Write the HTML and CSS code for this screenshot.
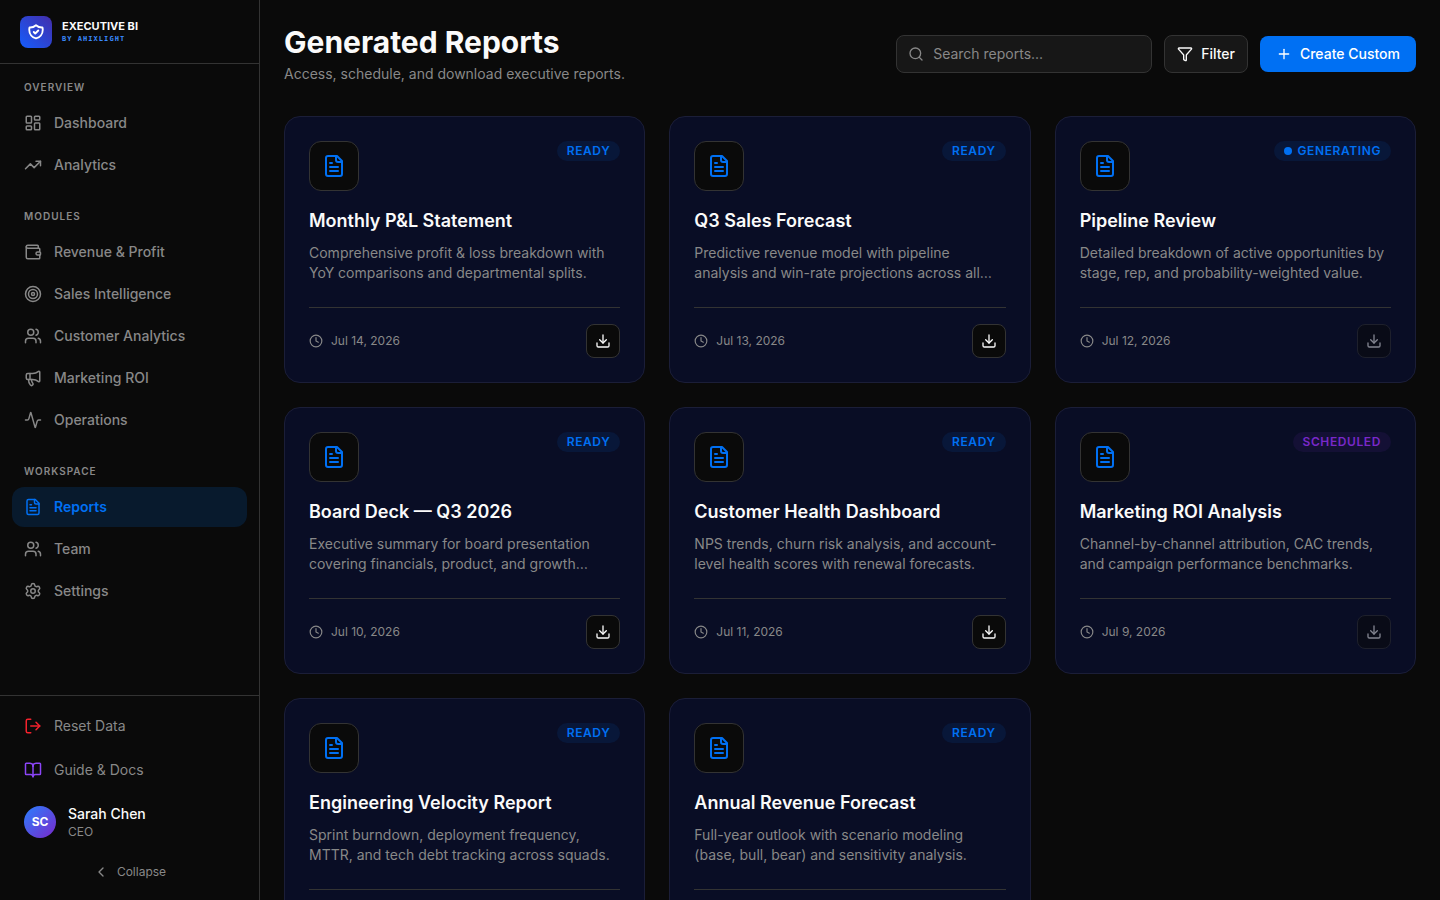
FILE: index.html
```html
<!DOCTYPE html>
<html lang="en">
<head>
<meta charset="utf-8">
<meta name="viewport" content="width=device-width, initial-scale=1">
<title>Generated Reports – Executive BI</title>
<link rel="stylesheet" href="styles.css">
</head>
<body>
<svg class="sprite" aria-hidden="true">
  <symbol id="i-shield" viewBox="0 0 24 24"><path d="m9 12 2 2 4-4m5.618-4.016A11.955 11.955 0 0 1 12 2.944a11.955 11.955 0 0 1-8.618 3.040A12.020 12.020 0 0 0 3 9c0 5.591 3.824 10.290 9 11.622 5.176-1.332 9-6.030 9-11.622 0-1.042-.133-2.052-.382-3.016z"/></symbol>
  <symbol id="i-dashboard" viewBox="0 0 24 24"><rect width="7" height="9" x="3" y="3" rx="1"/><rect width="7" height="5" x="14" y="3" rx="1"/><rect width="7" height="9" x="14" y="12" rx="1"/><rect width="7" height="5" x="3" y="16" rx="1"/></symbol>
  <symbol id="i-trend" viewBox="0 0 24 24"><path d="M16 7h6v6"/><path d="m22 7-8.500 8.500-5-5L2 17"/></symbol>
  <symbol id="i-wallet" viewBox="0 0 24 24"><path d="M19 7V4a1 1 0 0 0-1-1H5a2 2 0 0 0 0 4h15a1 1 0 0 1 1 1v4h-3a2 2 0 0 0 0 4h3a1 1 0 0 0 1-1v-2a1 1 0 0 0-1-1"/><path d="M3 5v14a2 2 0 0 0 2 2h15a1 1 0 0 0 1-1v-4"/></symbol>
  <symbol id="i-target" viewBox="0 0 24 24"><circle cx="12" cy="12" r="10"/><circle cx="12" cy="12" r="6"/><circle cx="12" cy="12" r="2"/></symbol>
  <symbol id="i-users" viewBox="0 0 24 24"><path d="M16 21v-2a4 4 0 0 0-4-4H6a4 4 0 0 0-4 4v2"/><path d="M16 3.128a4 4 0 0 1 0 7.744"/><path d="M22 21v-2a4 4 0 0 0-3-3.870"/><circle cx="9" cy="7" r="4"/></symbol>
  <symbol id="i-megaphone" viewBox="0 0 24 24"><path d="M11 6a13 13 0 0 0 8.400-2.800A1 1 0 0 1 21 4v12a1 1 0 0 1-1.600.8A13 13 0 0 0 11 14H5a2 2 0 0 1-2-2V8a2 2 0 0 1 2-2z"/><path d="M6 14a12 12 0 0 0 2.400 7.200 2 2 0 0 0 3.200-2.400A8 8 0 0 1 10 14"/><path d="M8 6v8"/></symbol>
  <symbol id="i-activity" viewBox="0 0 24 24"><path d="M22 12h-2.480a2 2 0 0 0-1.930 1.460l-2.350 8.360a.25.25 0 0 1-.48 0L9.240 2.180a.25.25 0 0 0-.48 0l-2.350 8.360A2 2 0 0 1 4.490 12H2"/></symbol>
  <symbol id="i-file" viewBox="0 0 24 24"><path d="M15 2H6a2 2 0 0 0-2 2v16a2 2 0 0 0 2 2h12a2 2 0 0 0 2-2V7Z"/><path d="M14 2v4a2 2 0 0 0 2 2h4"/><path d="M10 9H8"/><path d="M16 13H8"/><path d="M16 17H8"/></symbol>
  <symbol id="i-settings" viewBox="0 0 24 24"><path d="M9.671 4.136a2.340 2.340 0 0 1 4.659 0 2.340 2.340 0 0 0 3.319 1.915 2.340 2.340 0 0 1 2.330 4.033 2.340 2.340 0 0 0 0 3.831 2.340 2.340 0 0 1-2.330 4.033 2.340 2.340 0 0 0-3.319 1.915 2.340 2.340 0 0 1-4.659 0 2.340 2.340 0 0 0-3.320-1.915 2.340 2.340 0 0 1-2.330-4.033 2.340 2.340 0 0 0 0-3.831A2.340 2.340 0 0 1 6.350 6.051a2.340 2.340 0 0 0 3.319-1.915"/><circle cx="12" cy="12" r="3"/></symbol>
  <symbol id="i-logout" viewBox="0 0 24 24"><path d="m16 17 5-5-5-5"/><path d="M21 12H9"/><path d="M9 21H5a2 2 0 0 1-2-2V5a2 2 0 0 1 2-2h4"/></symbol>
  <symbol id="i-book" viewBox="0 0 24 24"><path d="M12 7v14"/><path d="M3 18a1 1 0 0 1-1-1V4a1 1 0 0 1 1-1h5a4 4 0 0 1 4 4 4 4 0 0 1 4-4h5a1 1 0 0 1 1 1v13a1 1 0 0 1-1 1h-6a3 3 0 0 0-3 3 3 3 0 0 0-3-3z"/></symbol>
  <symbol id="i-chevron" viewBox="0 0 24 24"><path d="m15 18-6-6 6-6"/></symbol>
  <symbol id="i-search" viewBox="0 0 24 24"><path d="m21 21-4.340-4.340"/><circle cx="11" cy="11" r="8"/></symbol>
  <symbol id="i-filter" viewBox="0 0 24 24"><path d="M10 20a1 1 0 0 0 .553.895l2 1A1 1 0 0 0 14 21v-7a2 2 0 0 1 .517-1.341L21.740 4.670A1 1 0 0 0 21 3H3a1 1 0 0 0-.742 1.670l7.225 7.989A2 2 0 0 1 10 14z"/></symbol>
  <symbol id="i-plus" viewBox="0 0 24 24"><path d="M5 12h14"/><path d="M12 5v14"/></symbol>
  <symbol id="i-clock" viewBox="0 0 24 24"><circle cx="12" cy="12" r="10"/><path d="M12 6v6l4 2"/></symbol>
  <symbol id="i-download" viewBox="0 0 24 24"><path d="M12 15V3"/><path d="M21 15v4a2 2 0 0 1-2 2H5a2 2 0 0 1-2-2v-4"/><path d="m7 10 5 5 5-5"/></symbol>
</svg>

<div class="app">
  <aside class="sidebar">
    <div class="brand">
      <span class="brand-mark"><svg class="icon icon-brand"><use href="#i-shield"/></svg></span>
      <span class="brand-text">
        <span class="brand-name">EXECUTIVE BI</span>
        <span class="brand-by">BY AHIXLIGHT</span>
      </span>
    </div>

    <nav class="nav">
      <section class="nav-group">
        <h2 class="nav-label">OVERVIEW</h2>
        <a class="nav-item" href="#dashboard"><svg class="icon"><use href="#i-dashboard"/></svg>Dashboard</a>
        <a class="nav-item" href="#analytics"><svg class="icon"><use href="#i-trend"/></svg>Analytics</a>
      </section>
      <section class="nav-group">
        <h2 class="nav-label">MODULES</h2>
        <a class="nav-item" href="#revenue"><svg class="icon"><use href="#i-wallet"/></svg>Revenue &amp; Profit</a>
        <a class="nav-item" href="#sales"><svg class="icon"><use href="#i-target"/></svg>Sales Intelligence</a>
        <a class="nav-item" href="#customers"><svg class="icon"><use href="#i-users"/></svg>Customer Analytics</a>
        <a class="nav-item" href="#marketing"><svg class="icon"><use href="#i-megaphone"/></svg>Marketing ROI</a>
        <a class="nav-item" href="#operations"><svg class="icon"><use href="#i-activity"/></svg>Operations</a>
      </section>
      <section class="nav-group">
        <h2 class="nav-label">WORKSPACE</h2>
        <a class="nav-item active" href="#reports" aria-current="page"><svg class="icon"><use href="#i-file"/></svg>Reports</a>
        <a class="nav-item" href="#team"><svg class="icon"><use href="#i-users"/></svg>Team</a>
        <a class="nav-item" href="#settings"><svg class="icon"><use href="#i-settings"/></svg>Settings</a>
      </section>
    </nav>

    <div class="side-foot">
      <button class="foot-item" type="button"><svg class="icon red"><use href="#i-logout"/></svg>Reset Data</button>
      <a class="foot-item" href="#docs"><svg class="icon violet"><use href="#i-book"/></svg>Guide &amp; Docs</a>
      <div class="user">
        <span class="avatar">SC</span>
        <span class="user-text">
          <span class="user-name">Sarah Chen</span>
          <span class="user-role">CEO</span>
        </span>
      </div>
      <button class="collapse" type="button"><svg class="icon icon-sm"><use href="#i-chevron"/></svg>Collapse</button>
    </div>
  </aside>

  <main class="main">
    <header class="page-head">
      <div>
        <h1 class="title">Generated Reports</h1>
        <p class="subtitle">Access, schedule, and download executive reports.</p>
      </div>
      <div class="tools">
        <label class="search">
          <svg class="icon icon-sm"><use href="#i-search"/></svg>
          <input class="search-input" type="text" placeholder="Search reports..." aria-label="Search reports">
        </label>
        <button class="btn btn-outline" type="button"><svg class="icon icon-sm"><use href="#i-filter"/></svg>Filter</button>
        <button class="btn btn-primary" type="button"><svg class="icon icon-sm"><use href="#i-plus"/></svg>Create Custom</button>
      </div>
    </header>

    <div class="grid">
      <article class="card">
        <div class="card-top"><span class="card-icon"><svg class="icon icon-lg"><use href="#i-file"/></svg></span><span class="badge">READY</span></div>
        <h3 class="card-title">Monthly P&amp;L Statement</h3>
        <p class="card-desc">Comprehensive profit &amp; loss breakdown with YoY comparisons and departmental splits.</p>
        <div class="card-foot"><span class="date"><svg class="icon icon-xs"><use href="#i-clock"/></svg>Jul 14, 2026</span><button class="download" type="button" aria-label="Download"><svg class="icon icon-sm"><use href="#i-download"/></svg></button></div>
      </article>
      <article class="card">
        <div class="card-top"><span class="card-icon"><svg class="icon icon-lg"><use href="#i-file"/></svg></span><span class="badge">READY</span></div>
        <h3 class="card-title">Q3 Sales Forecast</h3>
        <p class="card-desc">Predictive revenue model with pipeline analysis and win-rate projections across all…</p>
        <div class="card-foot"><span class="date"><svg class="icon icon-xs"><use href="#i-clock"/></svg>Jul 13, 2026</span><button class="download" type="button" aria-label="Download"><svg class="icon icon-sm"><use href="#i-download"/></svg></button></div>
      </article>
      <article class="card">
        <div class="card-top"><span class="card-icon"><svg class="icon icon-lg"><use href="#i-file"/></svg></span><span class="badge"><span class="dot"></span>GENERATING</span></div>
        <h3 class="card-title">Pipeline Review</h3>
        <p class="card-desc">Detailed breakdown of active opportunities by stage, rep, and probability-weighted value.</p>
        <div class="card-foot"><span class="date"><svg class="icon icon-xs"><use href="#i-clock"/></svg>Jul 12, 2026</span><button class="download" type="button" aria-label="Download" disabled><svg class="icon icon-sm"><use href="#i-download"/></svg></button></div>
      </article>
      <article class="card">
        <div class="card-top"><span class="card-icon"><svg class="icon icon-lg"><use href="#i-file"/></svg></span><span class="badge">READY</span></div>
        <h3 class="card-title">Board Deck — Q3 2026</h3>
        <p class="card-desc">Executive summary for board presentation covering financials, product, and growth…</p>
        <div class="card-foot"><span class="date"><svg class="icon icon-xs"><use href="#i-clock"/></svg>Jul 10, 2026</span><button class="download" type="button" aria-label="Download"><svg class="icon icon-sm"><use href="#i-download"/></svg></button></div>
      </article>
      <article class="card">
        <div class="card-top"><span class="card-icon"><svg class="icon icon-lg"><use href="#i-file"/></svg></span><span class="badge">READY</span></div>
        <h3 class="card-title">Customer Health Dashboard</h3>
        <p class="card-desc">NPS trends, churn risk analysis, and account-level health scores with renewal forecasts.</p>
        <div class="card-foot"><span class="date"><svg class="icon icon-xs"><use href="#i-clock"/></svg>Jul 11, 2026</span><button class="download" type="button" aria-label="Download"><svg class="icon icon-sm"><use href="#i-download"/></svg></button></div>
      </article>
      <article class="card">
        <div class="card-top"><span class="card-icon"><svg class="icon icon-lg"><use href="#i-file"/></svg></span><span class="badge scheduled">SCHEDULED</span></div>
        <h3 class="card-title">Marketing ROI Analysis</h3>
        <p class="card-desc">Channel-by-channel attribution, CAC trends, and campaign performance benchmarks.</p>
        <div class="card-foot"><span class="date"><svg class="icon icon-xs"><use href="#i-clock"/></svg>Jul 9, 2026</span><button class="download" type="button" aria-label="Download" disabled><svg class="icon icon-sm"><use href="#i-download"/></svg></button></div>
      </article>
      <article class="card">
        <div class="card-top"><span class="card-icon"><svg class="icon icon-lg"><use href="#i-file"/></svg></span><span class="badge">READY</span></div>
        <h3 class="card-title">Engineering Velocity Report</h3>
        <p class="card-desc">Sprint burndown, deployment frequency, MTTR, and tech debt tracking across squads.</p>
        <div class="card-foot"><span class="date"><svg class="icon icon-xs"><use href="#i-clock"/></svg>Jul 8, 2026</span><button class="download" type="button" aria-label="Download"><svg class="icon icon-sm"><use href="#i-download"/></svg></button></div>
      </article>
      <article class="card">
        <div class="card-top"><span class="card-icon"><svg class="icon icon-lg"><use href="#i-file"/></svg></span><span class="badge">READY</span></div>
        <h3 class="card-title">Annual Revenue Forecast</h3>
        <p class="card-desc">Full-year outlook with scenario modeling (base, bull, bear) and sensitivity analysis.</p>
        <div class="card-foot"><span class="date"><svg class="icon icon-xs"><use href="#i-clock"/></svg>Jul 7, 2026</span><button class="download" type="button" aria-label="Download"><svg class="icon icon-sm"><use href="#i-download"/></svg></button></div>
      </article>
    </div>
  </main>
</div>
</body>
</html>
```
FILE: styles.css
```css
:root {
  --bg: #0a0a0a;
  --surface: #171717;
  --line: #333333;
  --text: #fafafa;
  --muted: #888888;
  --blue: #0070f3;
  --purple: #7928ca;
}

* { box-sizing: border-box; }

body {
  margin: 0;
  background: var(--bg);
  color: var(--text);
  font-family: Inter, "Liberation Sans", sans-serif;
  font-size: 14px;
  line-height: 20px;
}

h1, h2, h3, p { margin: 0; }
a { color: inherit; text-decoration: none; }
button, input { font: inherit; color: inherit; }
button { cursor: pointer; }

.sprite { position: absolute; width: 0; height: 0; }

.icon {
  width: 18px;
  height: 18px;
  flex: none;
  fill: none;
  stroke: currentColor;
  stroke-width: 2;
  stroke-linecap: round;
  stroke-linejoin: round;
}
.icon-xs { width: 14px; height: 14px; }
.icon-sm { width: 16px; height: 16px; }
.icon-brand { stroke-width: 2.5; }
.icon-lg { width: 24px; height: 24px; }
.red { color: #f5222d; }
.violet { color: #8b45f7; }

.app { display: flex; height: 100vh; }

/* Sidebar */
.sidebar {
  display: flex;
  flex-direction: column;
  flex: none;
  width: 260px;
  border-right: 1px solid var(--line);
  color: var(--muted);
}

.brand {
  display: flex;
  align-items: center;
  gap: 10px;
  height: 64px;
  padding: 0 20px;
  border-bottom: 1px solid var(--line);
}
.brand-mark {
  display: grid;
  place-items: center;
  width: 32px;
  height: 32px;
  border-radius: 8px;
  background: linear-gradient(to top right, #155dfc, #432dab);
  color: #fff;
}
.brand-text { display: flex; flex-direction: column; }
.brand-name {
  color: var(--text);
  font-size: 11px;
  font-weight: 700;
  line-height: 14px;
}
.brand-by {
  color: #3b8bff;
  font-family: "DejaVu Sans Mono", monospace;
  font-size: 7px;
  font-weight: 700;
  line-height: 12px;
  letter-spacing: 0.15em;
}

.nav {
  display: flex;
  flex-direction: column;
  flex: 1;
  gap: 24px;
  padding: 16px 12px;
  overflow: hidden;
}
.nav-group { display: flex; flex-direction: column; gap: 2px; }
.nav-label {
  padding: 0 12px;
  margin-bottom: 6px;
  font-size: 10px;
  font-weight: 600;
  line-height: 15px;
  letter-spacing: 0.1em;
}
.nav-item, .foot-item {
  display: flex;
  align-items: center;
  gap: 12px;
  height: 40px;
  padding: 0 12px;
  border-radius: 12px;
  font-weight: 500;
}
.nav-item.active { background: #081a2d; color: var(--blue); font-weight: 600; }

.side-foot {
  display: flex;
  flex-direction: column;
  gap: 4px;
  padding: 10px 12px;
  border-top: 1px solid var(--line);
}
.foot-item { border: 0; background: none; font-weight: 400; }
.user {
  display: flex;
  align-items: center;
  gap: 12px;
  padding: 10px 12px;
}
.avatar {
  display: grid;
  place-items: center;
  width: 32px;
  height: 32px;
  border-radius: 50%;
  background: linear-gradient(to bottom right, #2b7fff, #7928ca);
  color: #fff;
  font-size: 12px;
  font-weight: 700;
}
.user-text { display: flex; flex-direction: column; }
.user-name { color: var(--text); font-weight: 500; }
.user-role { font-size: 12px; line-height: 16px; }
.collapse {
  display: flex;
  align-items: center;
  justify-content: center;
  gap: 8px;
  height: 36px;
  border: 0;
  background: none;
  font-size: 12px;
}

/* Main */
.main {
  flex: 1;
  min-width: 0;
  padding: 24px;
  overflow-y: auto;
  scrollbar-width: none;
}
.page-head {
  display: flex;
  align-items: center;
  justify-content: space-between;
  gap: 24px;
  margin-bottom: 32px;
}
.title {
  margin-bottom: 4px;
  font-size: 30px;
  font-weight: 700;
  line-height: 36px;
}
.subtitle { color: var(--muted); }

.tools { display: flex; align-items: center; gap: 12px; }
.search {
  display: flex;
  align-items: center;
  gap: 9px;
  width: 256px;
  height: 38px;
  padding: 0 11px;
  border: 1px solid var(--line);
  border-radius: 8px;
  background: var(--surface);
  color: var(--muted);
}
.search-input {
  flex: 1;
  min-width: 0;
  padding: 0;
  border: 0;
  outline: 0;
  background: none;
  color: var(--text);
}
.search-input::placeholder { color: var(--muted); }

.btn {
  display: flex;
  align-items: center;
  gap: 8px;
  border-radius: 8px;
  font-weight: 500;
  white-space: nowrap;
}
.btn-outline {
  height: 38px;
  padding: 0 12px;
  border: 1px solid var(--line);
  background: var(--surface);
}
.btn-primary {
  height: 36px;
  padding: 0 16px;
  border: 0;
  background: var(--blue);
  color: #fff;
}

.grid {
  display: grid;
  grid-template-columns: repeat(3, minmax(0, 1fr));
  gap: 24px;
}
.card {
  padding: 24px;
  border: 1px solid #1b1e38;
  border-radius: 16px;
  background: #090d25;
}
.card-top {
  display: flex;
  align-items: flex-start;
  justify-content: space-between;
  margin-bottom: 16px;
}
.card-icon {
  display: grid;
  place-items: center;
  width: 50px;
  height: 50px;
  border: 1px solid var(--line);
  border-radius: 12px;
  background: var(--bg);
  color: var(--blue);
}
.badge {
  display: flex;
  align-items: center;
  gap: 6px;
  height: 20px;
  padding: 0 10px;
  border-radius: 10px;
  background: #081739;
  color: var(--blue);
  font-size: 12px;
  font-weight: 600;
  letter-spacing: 0.05em;
}
.badge.scheduled { background: #141035; color: var(--purple); }
.dot {
  width: 8px;
  height: 8px;
  border-radius: 50%;
  background: var(--blue);
}
.card-title {
  margin-bottom: 8px;
  font-size: 18px;
  font-weight: 600;
  line-height: 28px;
}
.card-desc {
  display: -webkit-box;
  -webkit-box-orient: vertical;
  -webkit-line-clamp: 2;
  overflow: hidden;
  color: var(--muted);
}
.card-foot {
  display: flex;
  align-items: center;
  justify-content: space-between;
  margin-top: 24px;
  padding-top: 16px;
  border-top: 1px solid var(--line);
}
.date {
  display: flex;
  align-items: center;
  gap: 8px;
  color: var(--muted);
  font-size: 12px;
  line-height: 16px;
}
.download {
  display: grid;
  place-items: center;
  width: 34px;
  height: 34px;
  padding: 0;
  border: 1px solid var(--line);
  border-radius: 8px;
  background: var(--bg);
}
.download:disabled { opacity: 0.5; cursor: default; }
```
